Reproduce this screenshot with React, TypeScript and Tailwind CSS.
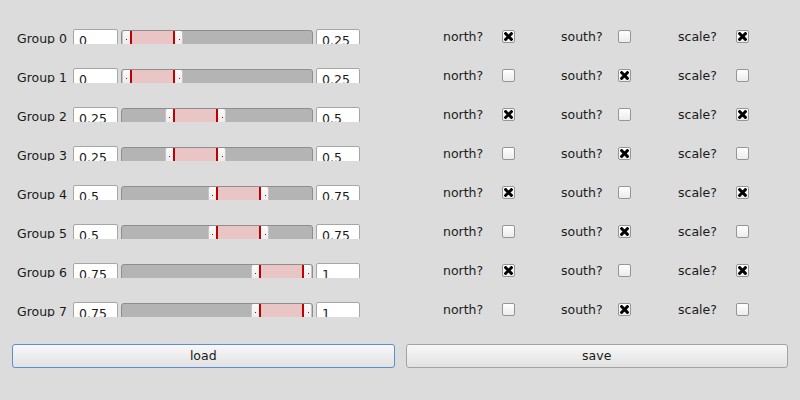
import React from "react";

type Row = { lo: number; loText: string; hiText: string; north: boolean; south: boolean; scale: boolean };

const rows: Row[] = [0, 1, 2, 3, 4, 5, 6, 7].map((i) => {
  const lo = Math.floor(i / 2) * 0.25;
  const hi = lo + 0.25;
  return {
    lo,
    loText: String(lo),
    hiText: String(hi),
    north: i % 2 === 0,
    south: i % 2 === 1,
    scale: i % 2 === 0,
  };
});

function TextBox({ value, width }: { value: string; width: string }) {
  return (
    <div
      className={`${width} h-[22px] shrink-0 rounded-[2px] border border-[#a6a6a6] bg-white pl-[5px] text-[12.5px] leading-[21px] text-[#1a1a1a]`}
    >
      {value}
    </div>
  );
}

function RangeSlider({ lo }: { lo: number }) {
  // handle moves 43px per quarter step
  const left = Math.round(lo * 172);
  return (
    <div className="relative mt-[1px] h-[21px] w-[192px] shrink-0 rounded-[3px] border border-[#8e8e8e] bg-[#b4b4b4]">
      <div
        className="absolute top-0 bottom-0 w-[61px] rounded-[2px] border-x border-[#c4c4c4] bg-gradient-to-b from-[#fbfbfb] to-[#e6e6e6]"
        style={{ left }}
      >
        <div className="absolute top-0 bottom-0 left-[7px] w-[45px] bg-[#e9c5c6]" />
        <div className="absolute top-0 bottom-0 left-[7px] w-[2px] bg-[#c00000]" />
        <div className="absolute top-0 bottom-0 left-[50px] w-[2px] bg-[#c00000]" />
        <div className="absolute left-[3px] top-[8px] h-[1px] w-[1px] bg-[#c00000]" />
        <div className="absolute left-[56px] top-[8px] h-[1px] w-[1px] bg-[#c00000]" />
      </div>
    </div>
  );
}

function CheckBox({ checked }: { checked: boolean }) {
  return (
    <div className="mt-[1px] flex h-[13px] w-[13px] shrink-0 items-center justify-center rounded-[2px] border border-[#959595] bg-gradient-to-b from-white to-[#ececec]">
      {checked && (
        <svg width="9" height="9" viewBox="0 0 9 9">
          <path d="M1.6 1.6 L7.4 7.4 M7.4 1.6 L1.6 7.4" stroke="#000" strokeWidth="2.9" strokeLinecap="square" />
        </svg>
      )}
    </div>
  );
}

function CheckLabel({ text, width }: { text: string; width: string }) {
  return <div className={`${width} mt-[1px] shrink-0 text-[12.5px] leading-[13px] text-[#1a1a1a]`}>{text}</div>;
}

export default function App() {
  return (
    <div
      className="h-[400px] w-[800px] overflow-hidden bg-[#dcdcdc]"
      style={{ fontFamily: "'DejaVu Sans', sans-serif" }}
    >
      <div className="flex flex-col gap-[24px] pt-[29px]">
        {rows.map((row, i) => (
          <div key={i} className="flex h-[15px] items-start">
            <div className="ml-[17px] flex h-[15px] w-[343px] shrink-0 items-start gap-[3px] overflow-hidden">
              <div className="w-[53px] shrink-0 text-[12.5px] leading-[19px] text-[#1a1a1a]">Group {i}</div>
              <TextBox value={row.loText} width="w-[45px]" />
              <RangeSlider lo={row.lo} />
              <TextBox value={row.hiText} width="w-[44px]" />
            </div>
            <div className="ml-[83px] flex items-start">
              <CheckLabel text="north?" width="w-[59px]" />
              <CheckBox checked={row.north} />
              <div className="ml-[46px]" />
              <CheckLabel text="south?" width="w-[57px]" />
              <CheckBox checked={row.south} />
              <div className="ml-[47px]" />
              <CheckLabel text="scale?" width="w-[58px]" />
              <CheckBox checked={row.scale} />
            </div>
          </div>
        ))}
      </div>

      <div className="mt-[27px] flex gap-[11px] px-[12px]">
        <button className="h-[24px] flex-1 rounded-[3px] border border-[#5b8ed7] bg-gradient-to-b from-[#f8f8f8] to-[#e2e2e2] pt-[1px] text-[12.5px] text-[#1a1a1a]">
          load
        </button>
        <button className="h-[24px] flex-1 rounded-[3px] border border-[#a3a3a3] bg-gradient-to-b from-[#f8f8f8] to-[#e2e2e2] pt-[1px] text-[12.5px] text-[#1a1a1a]">
          save
        </button>
      </div>
    </div>
  );
}
